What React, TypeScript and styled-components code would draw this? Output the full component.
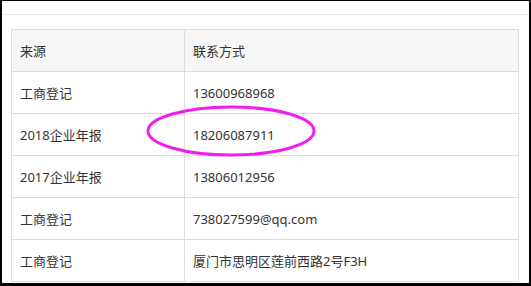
import React from "react";
import styled, { createGlobalStyle } from "styled-components";

const Global = createGlobalStyle`
  html, body { margin: 0; padding: 0; background: #fff; }
  * { box-sizing: border-box; }
`;

const Frame = styled.div`
  width: 531px;
  height: 286px;
  border-style: solid;
  border-color: #000;
  border-width: 1px 2px 3px 2px;
  background: #fff;
  font-family: "Noto Sans", "Noto Sans CJK SC", sans-serif;
  color: #333;
  position: relative;
  display: flex;
  flex-direction: column;
`;

const TopStrip = styled.div`
  height: 14px;
  border-bottom: 1px solid #e9e9e9;
  flex: none;
`;

const TableWrap = styled.div`
  margin: 14px 10px 0 9px;
`;

const Table = styled.table`
  width: 100%;
  border-collapse: collapse;
  font-size: 13px;
  table-layout: fixed;
`;

const HeadCell = styled.th`
  height: 42px;
  padding: 0 0 0 8px;
  text-align: left;
  font-weight: normal;
  background: #f7f7f7;
  border: 1px solid #dddddd;
  color: #333;
`;

const Cell = styled.td`
  height: 42px;
  padding: 0 0 0 8px;
  border: 1px solid #dddddd;
  color: #333;
`;

const Annotation = styled.svg`
  position: absolute;
  left: 143px;
  top: 103px;
  overflow: visible;
  pointer-events: none;
`;

const rows = [
  ["工商登记", "13600968968"],
  ["2018企业年报", "18206087911"],
  ["2017企业年报", "13806012956"],
  ["工商登记", "738027599@qq.com"],
  ["工商登记", "厦门市思明区莲前西路2号F3H"],
];

export default function App() {
  return (
    <>
      <Global />
      <Frame>
        <TopStrip />
        <TableWrap>
          <Table>
            <colgroup>
              <col style={{ width: 173 }} />
              <col />
            </colgroup>
            <thead>
              <tr>
                <HeadCell>来源</HeadCell>
                <HeadCell>联系方式</HeadCell>
              </tr>
            </thead>
            <tbody>
              {rows.map((r, i) => (
                <tr key={i}>
                  <Cell>{r[0]}</Cell>
                  <Cell>{r[1]}</Cell>
                </tr>
              ))}
            </tbody>
          </Table>
        </TableWrap>
        <Annotation width="172" height="54" viewBox="0 0 172 54">
          <ellipse cx="86" cy="27" rx="83" ry="24" fill="none" stroke="#f01ff0" strokeWidth="3" />
        </Annotation>
      </Frame>
    </>
  );
}
